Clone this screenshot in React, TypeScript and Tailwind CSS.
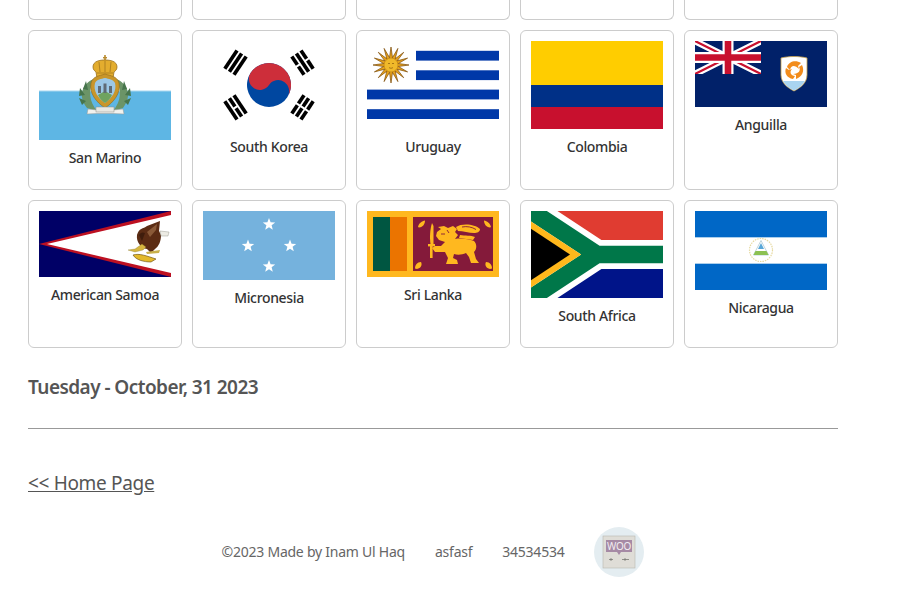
const font = 'font-["Noto_Sans",sans-serif]'

const SanMarino = () => (
  <svg viewBox="0 0 132 99" className="block w-full h-[99px]">
    <rect y="50" width="132" height="49" fill="#5eb6e4" />
    <rect y="49.5" width="132" height="1" fill="#a9d8f0" />
    {/* wreath */}
    <path d="M55 38C44 42 38 54 48 67L58 70C50 60 49 50 55 38Z" fill="#6b9467" />
    <path d="M77 38C88 42 94 54 84 67L74 70C82 60 83 50 77 38Z" fill="#6b9467" />
    <path d="M47 40l-3 8 5 1zM41 47l-1 8 6-1zM40 57l3 7 4-4zM85 40l3 8-5 1zM91 47l1 8-6-1zM92 57l-3 7-4-4z" fill="#47754c" />
    {/* crown */}
    <rect x="65.2" y="14" width="1.6" height="7" fill="#b98b2e" />
    <rect x="64" y="16" width="4" height="1.4" fill="#b98b2e" />
    <path d="M54 26C54 20 61 19 66 19C71 19 78 20 78 26C78 29 76 30 75 31L74 37H58L57 31C56 30 54 29 54 26Z" fill="#e3ad2e" stroke="#9a701a" strokeWidth=".8" />
    <path d="M60 21L61 31M66 20V31M72 21L71 31M58 32H74" stroke="#9a701a" strokeWidth=".7" fill="none" />
    {/* shield */}
    <path d="M52 42C54 35 60 35 66 33C72 35 78 35 80 42C82 52 75 61 66 67C57 61 50 52 52 42Z" fill="#c9962a" stroke="#8f6a1c" strokeWidth=".6" />
    <path d="M56 42C58 38 62 38 66 37C70 38 74 38 76 42C78 50 73 57 66 62C59 57 54 50 56 42Z" fill="#9cc8e6" />
    <path d="M59 54L66 50L73 54C71 58 69 60 66 62C63 60 61 58 59 54Z" fill="#6fa35f" />
    <path d="M59 52V45h3v7zM64.5 52V42.5h3V52zM70 52V45h3v7z" fill="#5f6b75" />
    {/* ribbon */}
    <path d="M49 68L58 69H74L84 68L85 73L74 72.5H58L48 73Z" fill="#f2f2ee" stroke="#9a9a94" strokeWidth=".5" />
    <rect x="57" y="66" width="18" height="5" fill="#e8e8e2" stroke="#8f8f88" strokeWidth=".5" />
  </svg>
)

// one trigram of the Korean flag
const Trigram = ({ x, y, angle, bars }: { x: number; y: number; angle: number; bars: boolean[] }) => (
  <g transform={`translate(${x} ${y}) rotate(${angle})`} fill="#000">
    {bars.map((solid, i) =>
      solid ? (
        <rect key={i} x="-11" y={-7.33 + i * 5.5} width="22" height="3.67" />
      ) : (
        <g key={i}>
          <rect x="-11" y={-7.33 + i * 5.5} width="10" height="3.67" />
          <rect x="1" y={-7.33 + i * 5.5} width="10" height="3.67" />
        </g>
      ),
    )}
  </g>
)

const SouthKorea = () => (
  <svg viewBox="0 0 132 88" className="block w-full h-[88px]">
    <Trigram x={32.5} y={21.6} angle={-56.3} bars={[true, true, true]} />
    <Trigram x={99.5} y={21.6} angle={56.3} bars={[false, true, false]} />
    <Trigram x={32.5} y={66.4} angle={56.3} bars={[true, false, true]} />
    <Trigram x={99.5} y={66.4} angle={-56.3} bars={[false, false, false]} />
    <g transform="translate(66 44) rotate(33.7)">
      <circle r="22" fill="#0047a0" />
      <path d="M-22 0A22 22 0 0 1 22 0A11 11 0 0 0 0 0A11 11 0 0 1 -22 0Z" fill="#cd2e3a" />
    </g>
  </svg>
)

const sunRays = Array.from({ length: 32 }, (_, i) => {
  const a = (i * Math.PI) / 16
  const r = i % 2 === 0 ? 18 : 7.5
  return `${(24 + r * Math.sin(a)).toFixed(1)},${(24 - r * Math.cos(a)).toFixed(1)}`
}).join(' ')

const Uruguay = () => (
  <svg viewBox="0 0 132 88" className="block w-full h-[88px]">
    <rect x="49" y="9.8" width="83" height="9.8" fill="#0038a8" />
    <rect x="49" y="29.3" width="83" height="9.8" fill="#0038a8" />
    <rect y="48.6" width="132" height="9.8" fill="#0038a8" />
    <rect y="68.2" width="132" height="9.8" fill="#0038a8" />
    <polygon points={sunRays} fill="#e6a21c" stroke="#7b4a08" strokeWidth=".7" />
    <circle cx="24" cy="24" r="7" fill="#f0b92a" stroke="#a86f10" strokeWidth=".5" />
    <path d="M21 22.5h2M25 22.5h2M22 26.5c1 1 3 1 4 0" stroke="#8a5a0c" strokeWidth=".7" fill="none" />
  </svg>
)

const Colombia = () => (
  <div className="flex flex-col h-[88px]">
    <div className="h-[44px] bg-[#ffcd00]" />
    <div className="h-[22px] bg-[#003087]" />
    <div className="h-[22px] bg-[#c8102e]" />
  </div>
)

const Anguilla = () => (
  <svg viewBox="0 0 132 66" className="block w-full h-[66px]">
    <rect width="132" height="66" fill="#012169" />
    <svg x="0" y="0" width="66" height="33" viewBox="0 0 60 30">
      <rect width="60" height="30" fill="#012169" />
      <path d="M0 0L60 30M60 0L0 30" stroke="#fff" strokeWidth="6" />
      <path d="M0 0L60 30M60 0L0 30" stroke="#c8102e" strokeWidth="2" />
      <path d="M30 0V30M0 15H60" stroke="#fff" strokeWidth="10" />
      <path d="M30 0V30M0 15H60" stroke="#c8102e" strokeWidth="6" />
    </svg>
    <path d="M86 17C94 15 104 15 112 17V34C112 42 105 47 99 50C93 47 86 42 86 34Z" fill="#fff" stroke="#c9a24a" strokeWidth=".8" />
    <path d="M88 40H110C107 45 103 47.5 99 49.5C95 47.5 91 45 88 40Z" fill="#a9d4f0" />
    <g fill="#f28c1c">
      <path d="M92 26C94 20 101 19 106 22L103 25L104 28C100 24 96 24 95 29Z" />
      <path d="M107 24C110 30 107 36 101 38L101 34L98 33C104 33 106 29 104 26Z" />
      <path d="M98 38C92 37 89 32 91 27L94 29L97 28C94 31 96 35 100 35Z" />
    </g>
  </svg>
)

const AmericanSamoa = () => (
  <svg viewBox="0 0 132 66" className="block w-full h-[66px]">
    <rect width="132" height="66" fill="#000066" />
    <path d="M0 33L132 0V66Z" fill="#bd1021" />
    <path d="M8 33L132 4V62Z" fill="#fff" />
    {/* eagle */}
    <path d="M98 24C100 17 104 18 108 15L121 10L120 20L122 24C122 30 120 35 116 38L112 42L108 38C102 37 97 31 98 24Z" fill="#5b2c14" />
    <path d="M108 21L118 13L117 19L111 26Z" fill="#8a5a38" />
    <path d="M100 24C102 21 104 21 106 22L103 30Z" fill="#3f1d0c" />
    <path d="M121 20L130 21L129 25L122 25Z" fill="#ecebe4" stroke="#8a8a80" strokeWidth=".4" />
    <path d="M89 39L96 38L103 33L107 36L104 39L96 41Z" fill="#d6b640" stroke="#7a6a20" strokeWidth=".3" />
    <path d="M107 41L121 39L120 42L108 43Z" fill="#c9b04a" />
    <path d="M94 44C100 42 108 45 117 48L112 51C105 51 97 49 94 44Z" fill="#e3b92a" stroke="#5f4410" strokeWidth=".6" />
  </svg>
)

const star = (cx: number, cy: number, r: number) =>
  Array.from({ length: 10 }, (_, i) => {
    const a = (i * Math.PI) / 5
    const d = i % 2 === 0 ? r : r * 0.42
    return `${(cx + d * Math.sin(a)).toFixed(1)},${(cy - d * Math.cos(a)).toFixed(1)}`
  }).join(' ')

const Micronesia = () => (
  <svg viewBox="0 0 132 69" className="block w-full h-[69px]">
    <rect width="132" height="69" fill="#75b2dd" />
    {[[66, 13.5], [45, 35], [87, 35], [66, 55.5]].map(([x, y]) => (
      <polygon key={x * y} points={star(x, y, 6.5)} fill="#fff" />
    ))}
  </svg>
)

const SriLanka = () => (
  <svg viewBox="0 0 132 66" className="block w-full h-[66px]">
    <rect width="132" height="66" fill="#ffb81f" />
    <rect x="6" y="6" width="17" height="54" fill="#005641" />
    <rect x="23" y="6" width="17" height="54" fill="#eb7400" />
    <rect x="46" y="6" width="80" height="54" fill="#841a3a" />
    <g fill="#ffb81f">
      <path d="M51 16C52 12 55 10 58 9.5C58 13 56 16 52 16.5ZM124 16C123 12 120 10 117 9.5C117 13 119 16 123 16.5Z" />
      <path d="M48 57.5C48 54 50 51 54 51C55.5 54 54 57 50 58ZM125 57.5C125 54 123 51 119 51C117.5 54 119 57 123 58Z" />
      {/* sword */}
      <path d="M65 12L66.5 15L66.5 33H63.5C62.5 27 63 18 65 12Z" />
      <rect x="61" y="33" width="7" height="2.4" />
      <rect x="63" y="35" width="2.6" height="12" />
      {/* lion */}
      <path d="M70 21L74 18L71 16L77 15L81 17L86 15L90 18L88 21L91 24L88 28C94 27 102 28 107 30C110 33 110 38 107 41L109 48L112 52H104L102 46L99 42C95 44 90 44 87 43L86 47L90 49L91 53H79L81 47L78 41L68 41L65 37L68 35L74 35L78 31L72 29L69 25Z" />
      {/* tail */}
      <path d="M89 16C95 12 108 13 113 18C113 21 110 22 107 22C102 22 96 20 91 20ZM93 24C98 25 104 24 108 26L106 29L92 27Z" />
    </g>
    <path d="M95 16C100 15 105 16 109 18.5M74 23h4M80 19l2 3" stroke="#841a3a" strokeWidth=".9" fill="none" />
  </svg>
)

const SouthAfrica = () => (
  <svg viewBox="0 0 90 60" preserveAspectRatio="none" className="block w-full h-[87px]">
    <rect width="90" height="30" fill="#e03c31" />
    <rect y="30" width="90" height="30" fill="#001489" />
    <path d="M0 0L45 30L0 60M45 30H90" stroke="#fff" strokeWidth="20" fill="none" />
    <path d="M0 0L45 30L0 60M45 30H90" stroke="#007749" strokeWidth="12" fill="none" />
    <path d="M0 7.2L34.2 30L0 52.8Z" fill="#ffb81c" />
    <path d="M0 12.3L26.6 30L0 47.7Z" fill="#000" />
  </svg>
)

const Nicaragua = () => (
  <svg viewBox="0 0 132 79" className="block w-full h-[79px]">
    <rect width="132" height="26.3" fill="#0067c6" />
    <rect y="52.7" width="132" height="26.3" fill="#0067c6" />
    <rect y="26" width="132" height=".8" fill="#a9cdea" />
    <rect y="52.2" width="132" height=".8" fill="#a9cdea" />
    <circle cx="66" cy="39" r="11.5" fill="none" stroke="#e6d9a0" strokeWidth="1.2" strokeDasharray="1.5 1" />
    <path d="M66 29.5L73.5 44H58.5Z" fill="#fff" stroke="#7fa9b8" strokeWidth=".5" />
    <path d="M60.5 40H71.5L73.5 44H58.5Z" fill="#8cc152" />
    <path d="M66 32L69 38H63Z" fill="#59a7d8" />
  </svg>
)

const WooBadge = () => (
  <svg viewBox="0 0 50 50" className="block w-[50px] h-[50px]">
    <circle cx="25" cy="25" r="25" fill="#e4edf1" />
    <rect x="9" y="9" width="32" height="32" fill="#dfddd7" stroke="#b9b7b0" strokeWidth=".6" />
    <path d="M12 13H38V25H27L25 28L23 25H12Z" fill="#a68aa5" />
    <text x="25" y="23" textAnchor="middle" fontSize="10" fill="#f2edf2" fontFamily="Noto Sans, sans-serif">WOO</text>
    <path d="M15 32.5h4M17 31v3M28 32.5h7M31 31v3" stroke="#6f6f69" strokeWidth=".7" />
  </svg>
)

const cards = [
  { name: 'San Marino', flag: <SanMarino /> },
  { name: 'South Korea', flag: <SouthKorea /> },
  { name: 'Uruguay', flag: <Uruguay /> },
  { name: 'Colombia', flag: <Colombia /> },
  { name: 'Anguilla', flag: <Anguilla /> },
  { name: 'American Samoa', flag: <AmericanSamoa /> },
  { name: 'Micronesia', flag: <Micronesia /> },
  { name: 'Sri Lanka', flag: <SriLanka /> },
  { name: 'South Africa', flag: <SouthAfrica /> },
  { name: 'Nicaragua', flag: <Nicaragua /> },
]

export default function App() {
  return (
    <div className={`${font} bg-white min-h-[592px] w-[900px] overflow-hidden`}>
      <div className="ml-[28px] w-[810px]">
        <div className="grid grid-cols-5 gap-[10px]">
          {/* bottoms of the row scrolled off the top */}
          {[0, 1, 2, 3, 4].map((i) => (
            <div key={i} className="h-[20px] rounded-b-[6px] border border-t-0 border-[#ccc]" />
          ))}
          {cards.map((card) => (
            <div key={card.name} className="rounded-[6px] border border-[#ccc] px-[10px] pt-[10px] pb-[21px] text-center">
              {card.flag}
              <p className="mt-[7px] text-[14px] leading-[21px] font-medium tracking-[-0.35px] text-[#333]">{card.name}</p>
            </div>
          ))}
        </div>

        <h2 className="mt-[24px] text-[19px] leading-[30px] font-semibold tracking-[-0.55px] text-[#555]">Tuesday - October, 31 2023</h2>
        <hr className="mt-[26px] border-t border-[#999]" />
        <a href="#" className="block mt-[39px] text-[19px] leading-[30px] tracking-[-0.33px] text-[#555] underline">&lt;&lt; Home Page</a>

        <div className="mt-[29px] flex items-center justify-center gap-[30px] text-[14px] tracking-[-0.24px] text-[#666]">
          <span className="mb-[2px]">©2023 Made by Inam Ul Haq</span>
          <span className="mb-[2px]">asfasf</span>
          <span className="mb-[2px]">34534534</span>
          <WooBadge />
        </div>
      </div>
    </div>
  )
}
